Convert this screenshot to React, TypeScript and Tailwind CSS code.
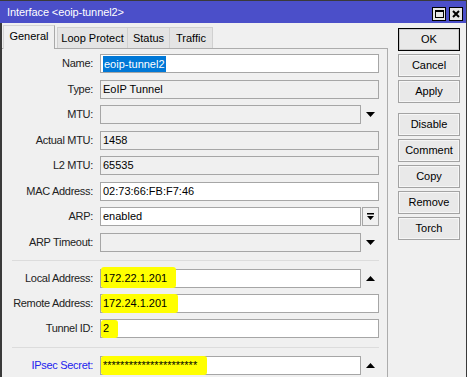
import React from 'react';

const font = "font-['Liberation_Sans',Arial,sans-serif]";

const DownTri = () => (
  <svg width="9" height="5" viewBox="0 0 9 5">
    <path d="M0 0 H9 L4.5 5 Z" fill="#000" />
  </svg>
);

const UpTri = () => (
  <svg width="9" height="5" viewBox="0 0 9 5">
    <path d="M0 5 H9 L4.5 0 Z" fill="#000" />
  </svg>
);

type FieldProps = {
  label: string;
  blue?: boolean;
  children: React.ReactNode;
};

const Field: React.FC<FieldProps> = ({ label, blue, children }) => (
  <div className="flex items-center h-[19px]">
    <div
      className={`w-[91px] text-right text-[11px] tracking-[-0.3px] leading-none ${
        blue ? 'text-[#2222ee]' : 'text-[#222]'
      }`}
    >
      {label}
    </div>
    <div className="ml-[7px] flex items-center h-full">{children}</div>
  </div>
);

type BoxProps = {
  value?: string;
  ro?: boolean;
  short?: boolean;
  mark?: string;
  children?: React.ReactNode;
};

const Box: React.FC<BoxProps> = ({ value, ro, short, mark, children }) => (
  <div
    className={`relative h-[19px] border border-[#a6a6a6] flex items-center pl-[2px] text-[11px] text-black leading-none ${
      short ? 'w-[261px]' : 'w-[279px]'
    } ${ro ? 'bg-[#f0f0f0]' : 'bg-white'}`}
  >
    {mark && <span className={`absolute bg-[#ffff00] rounded-[3px] ${mark}`} />}
    <span className="relative">{value}</span>
    {children}
  </div>
);

const Trail: React.FC<{ children: React.ReactNode }> = ({ children }) => (
  <div className="w-[18px] h-full flex items-center justify-center">{children}</div>
);

const Btn: React.FC<{ label: string; primary?: boolean }> = ({ label, primary }) => (
  <div
    className={`h-[23px] w-[62px] flex items-center justify-center text-[11px] text-black bg-[#e9e9e9] ${
      primary ? 'border border-black shadow-[inset_0_0_0_1px_#c9c9c9]' : 'border border-[#a3a3a3] shadow-[inset_0_0_0_1px_#f6f6f6]'
    }`}
  >
    {label}
  </div>
);

const App: React.FC = () => {
  return (
    <div className={`w-[469px] h-[377px] overflow-hidden bg-white ${font}`}>
      <div className="w-[467px] h-[377px] border-t border-r border-[#3a3a3a] bg-[#f0f0f0] flex flex-col">
        {/* Title bar */}
        <div className="h-[22px] bg-[#4b4fc9] flex items-center pl-[7px] pr-[3px]">
          <span className="text-white text-[11px] tracking-[-0.1px]">Interface &lt;eoip-tunnel2&gt;</span>
          <div className="ml-auto flex gap-[3px] mt-[3px]">
            <div className="w-[14px] h-[14px] border border-black bg-[#e6e6e6] flex items-center justify-center">
              <div className="w-[9px] h-[8px] border border-black border-t-2" />
            </div>
            <div className="w-[14px] h-[14px] border border-black bg-[#e6e6e6] flex items-center justify-center">
              <svg width="8" height="8" viewBox="0 0 8 8">
                <path d="M1 1 L7 7 M7 1 L1 7" stroke="#000" strokeWidth="2" />
              </svg>
            </div>
          </div>
        </div>

        <div className="flex-1 flex border-l-2 border-[#3a3a3a]">
          {/* Left: tabs and form */}
          <div className="w-[386px] flex flex-col">
            <div className="h-[25px] flex items-end pl-[1px] text-[11px] text-black">
              <div className="relative z-10 -mb-px h-[24px] w-[52px] bg-[#f0f0f0] border-l border-t border-r border-[#d4d4d4] border-r-[#a9a9a9] flex items-center justify-center pb-[3px]">
                General
              </div>
              <div className="ml-[2px] h-[21px] w-[71px] bg-[#e4e4e4] border border-b-0 border-[#d0d0d0] flex items-center justify-center">
                Loop Protect
              </div>
              <div className="h-[21px] w-[42px] bg-[#e4e4e4] border border-b-0 border-l-0 border-[#d0d0d0] flex items-center justify-center">
                Status
              </div>
              <div className="h-[21px] w-[43px] bg-[#e4e4e4] border border-b-0 border-l-0 border-[#d0d0d0] flex items-center justify-center">
                Traffic
              </div>
            </div>

            <div className="flex-1 border-t border-r border-[#acacac] pt-[5px]">
              <div className="flex flex-col gap-[6.5px]">
                <Field label="Name:">
                  <Box>
                    <span className="bg-[#0078d7] text-white leading-[16px] px-px">eoip-tunnel2</span>
                  </Box>
                </Field>
                <Field label="Type:">
                  <Box value="EoIP Tunnel" ro />
                </Field>
                <Field label="MTU:">
                  <Box ro short />
                  <Trail><DownTri /></Trail>
                </Field>
                <Field label="Actual MTU:">
                  <Box value="1458" ro />
                </Field>
                <Field label="L2 MTU:">
                  <Box value="65535" ro />
                </Field>
                <Field label="MAC Address:">
                  <Box value="02:73:66:FB:F7:46" />
                </Field>
                <Field label="ARP:">
                  <Box value="enabled" short />
                  <div className="ml-px w-[17px] h-[19px] border border-[#a6a6a6] bg-[#f0f0f0] flex items-center justify-center">
                    <svg width="7" height="7" viewBox="0 0 7 7">
                      <rect x="0" y="0" width="7" height="1.5" fill="#000" />
                      <path d="M0 3 H7 L3.5 7 Z" fill="#000" />
                    </svg>
                  </div>
                </Field>
                <Field label="ARP Timeout:">
                  <Box ro short />
                  <Trail><DownTri /></Trail>
                </Field>
              </div>

              <div className="ml-[10px] w-[367px] h-px bg-[#dcdcdc] mt-[8px]" />

              <div className="flex flex-col gap-[6px] mt-[8px]">
                <Field label="Local Address:">
                  <Box value="172.22.1.201" short mark="left-[0px] top-[-3px] w-[75px] h-[21px]" />
                  <Trail><UpTri /></Trail>
                </Field>
                <Field label="Remote Address:">
                  <Box value="172.24.1.201" mark="left-[0px] top-[-1px] w-[77px] h-[19px]" />
                </Field>
                <Field label="Tunnel ID:">
                  <Box value="2" mark="left-[0px] top-[0px] w-[17px] h-[18px]" />
                </Field>
              </div>

              <div className="ml-[10px] w-[367px] h-px bg-[#dcdcdc] mt-[9px]" />

              <div className="mt-[8px]">
                <Field label="IPsec Secret:" blue>
                  <Box
                    value="**********************"
                    short
                    mark="left-[0px] top-[-1px] w-[106px] h-[19px]"
                  />
                  <Trail><UpTri /></Trail>
                </Field>
              </div>
            </div>
          </div>

          {/* Right: buttons */}
          <div className="ml-[10px] pt-[5px] flex flex-col">
            <div className="flex flex-col gap-[3px]">
              <Btn label="OK" primary />
              <Btn label="Cancel" />
              <Btn label="Apply" />
            </div>
            <div className="flex flex-col gap-[3px] mt-[10px]">
              <Btn label="Disable" />
              <Btn label="Comment" />
              <Btn label="Copy" />
              <Btn label="Remove" />
              <Btn label="Torch" />
            </div>
          </div>
        </div>
      </div>
    </div>
  );
};

export default App;
